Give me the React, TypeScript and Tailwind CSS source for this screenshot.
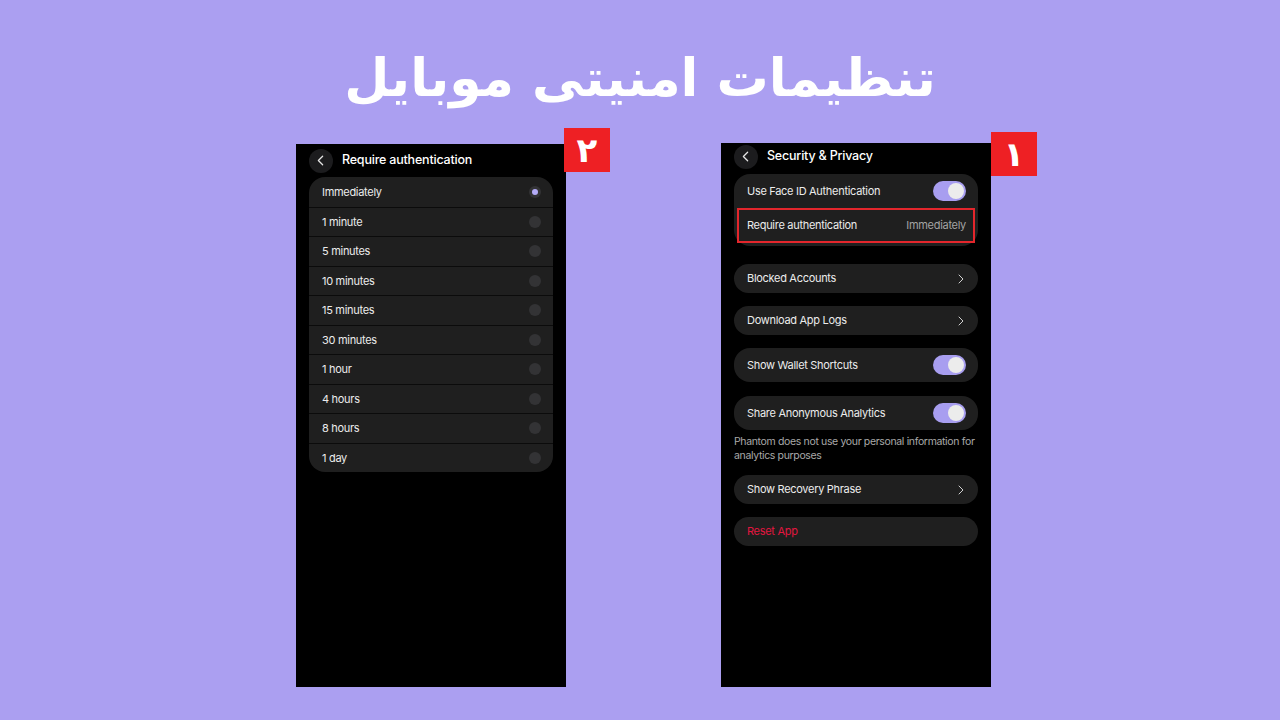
import { ChevronLeft, ChevronRight } from 'lucide-react';

const times = ['Immediately', '1 minute', '5 minutes', '10 minutes', '15 minutes', '30 minutes', '1 hour', '4 hours', '8 hours', '1 day'];

function BackButton() {
  return (
    <div className="w-6 h-6 rounded-full bg-[#1c1c1e] flex items-center justify-center text-[#e5e5e5]">
      <ChevronLeft size={17} strokeWidth={1.8} className="-ml-px" />
    </div>
  );
}

function Toggle() {
  return (
    <div className="w-[33px] h-[20px] rounded-full bg-[#a89ef0] flex items-center justify-end pr-[2px]">
      <div className="w-[16px] h-[16px] rounded-full bg-[#ececec]" />
    </div>
  );
}

function Chevron() {
  return <ChevronRight size={16} strokeWidth={1.5} className="text-[#d0d0d0] -mr-[3px]" />;
}

function Badge({ digit, className }: { digit: string; className: string }) {
  return (
    <div
      className={`absolute w-[46px] h-[44px] bg-[#ee2024] flex items-center justify-center text-white text-[34px] font-bold leading-none ${className}`}
      style={{ fontFamily: '"DejaVu Sans", sans-serif' }}
    >
      {digit}
    </div>
  );
}

function Row({ label, right, h = 'h-[29px]', danger }: { label: string; right?: React.ReactNode; h?: string; danger?: boolean }) {
  return (
    <div className={`${h} rounded-2xl bg-[#1f1f1f] flex items-center justify-between pl-[13px] pr-[12px]`}>
      <span className={danger ? 'text-[#e3163f]' : 'text-[#ececec]'}>{label}</span>
      {right}
    </div>
  );
}

export default function App() {
  return (
    <div className="w-[1280px] h-[720px] bg-[#ab9ff1] overflow-hidden flex flex-col items-center" style={{ fontFamily: 'Inter, "Liberation Sans", sans-serif' }}>
      <h1
        dir="rtl"
        className="mt-[40px] text-white text-[52px] font-bold leading-[76px]"
        style={{ fontFamily: '"DejaVu Sans", sans-serif' }}
      >
        تنظیمات امنیتی موبایل
      </h1>

      <div className="flex items-start gap-[155px] pl-[7px] mt-[27px] text-[11px] tracking-[-0.3px]">
        {/* time picker */}
        <div className="relative w-[270px] h-[543px] bg-black mt-px">
          <Badge digit="۲" className="left-[268px] -top-[16px]" />
          <div className="flex items-center gap-[9px] pl-[13px] pt-[3px] h-[30px]">
            <BackButton />
            <span className="text-white text-[12.5px] font-medium tracking-[-0.2px]">Require authentication</span>
          </div>
          <div className="mx-[13px] mt-[3px] rounded-2xl bg-[#1f1f1f] overflow-hidden">
            {times.map((t, i) => (
              <div
                key={t}
                className={`h-[29.5px] flex items-center justify-between pl-[13px] pr-[12px] ${i > 0 ? 'border-t border-[#0b0b0b]' : ''}`}
              >
                <span className="text-[#ececec]">{t}</span>
                <div className="w-[12px] h-[12px] rounded-full bg-[#333335] flex items-center justify-center">
                  {i === 0 && <div className="w-[6px] h-[6px] rounded-full bg-[#b4abf7]" />}
                </div>
              </div>
            ))}
          </div>
        </div>

        {/* security & privacy */}
        <div className="relative w-[270px] h-[544px] bg-black">
          <Badge digit="۱" className="left-[270px] -top-[11px]" />
          <div className="flex items-center gap-[9px] pl-[13px] pt-px h-[26px]">
            <BackButton />
            <span className="text-white text-[12.5px] font-medium tracking-[-0.2px]">Security &amp; Privacy</span>
          </div>
          <div className="px-[13px] mt-[5px] flex flex-col">
            <div className="rounded-2xl bg-[#1f1f1f] flex flex-col">
              <div className="h-[34px] flex items-center justify-between pl-[13px] pr-[12px]">
                <span className="text-[#ececec]">Use Face ID Authentication</span>
                <Toggle />
              </div>
              <div className="h-[38px] px-[3px] pb-[3px]">
                <div className="h-full border-2 border-[#e3262c] flex items-center justify-between pl-[8px] pr-[7px]">
                  <span className="text-[#ececec]">Require authentication</span>
                  <span className="text-[#a3a3a3]">Immediately</span>
                </div>
              </div>
            </div>

            <div className="mt-[18px] flex flex-col gap-[13px]">
              <Row label="Blocked Accounts" right={<Chevron />} />
              <Row label="Download App Logs" right={<Chevron />} />
              <Row label="Show Wallet Shortcuts" right={<Toggle />} h="h-[34px]" />
            </div>
            <div className="mt-[14px]">
              <Row label="Share Anonymous Analytics" right={<Toggle />} h="h-[34px]" />
            </div>
            <p className="mt-[5px] -mr-[6px] text-[10.5px] leading-[14px] tracking-[-0.35px] text-[#a9a9a9]">
              Phantom does not use your personal information for analytics purposes
            </p>
            <div className="mt-[12px] flex flex-col gap-[13px]">
              <Row label="Show Recovery Phrase" right={<Chevron />} />
              <Row label="Reset App" danger />
            </div>
          </div>
        </div>
      </div>
    </div>
  );
}
